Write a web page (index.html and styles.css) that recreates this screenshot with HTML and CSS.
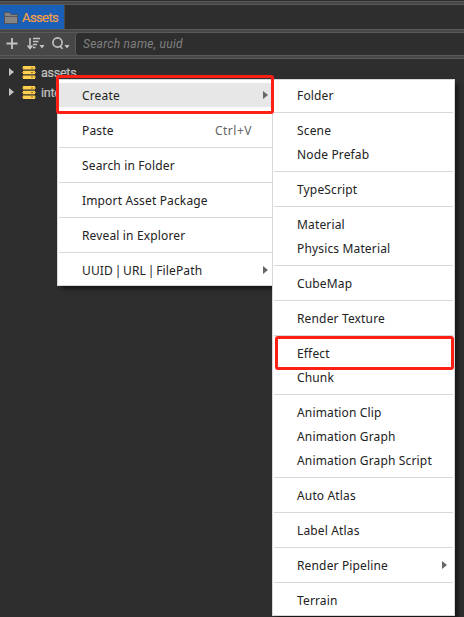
FILE: index.html
```html
<!DOCTYPE html>
<html lang="en">
<head>
<meta charset="utf-8">
<title>Assets</title>
<link rel="stylesheet" href="styles.css">
</head>
<body>
<div class="panel">
  <div class="divider"></div>
  <header class="tabs">
    <div class="tab">
      <svg class="folder" width="14" height="13" viewBox="0 0 14 13"><path d="M.5 1.500h5l1.500 2h6.500v9H.5z" fill="#858585" stroke="#4d5460"/><path d="M1 5.500h12" stroke="#5c5c5c"/></svg>
      <span>Assets</span>
    </div>
  </header>
  <div class="divider"></div>
  <div class="toolbar">
    <svg width="75" height="22" viewBox="0 0 75 22" fill="none" stroke="#c4c4c4">
      <path d="M12 5v11M6.500 10.500h11" stroke-width="1.800"/>
      <path d="M30 5v10M27.500 12.500l2.500 3 2.500-3M33 5.500h7M33 8.500h5.500M33 11.500h4M33 14.500h2.500" stroke-width="1.600"/>
      <path d="M39.500 12h5l-2.500 3.500z" fill="#c4c4c4" stroke="none"/>
      <circle cx="57.500" cy="9.500" r="4.600" stroke-width="1.600"/><path d="M60 13l2.500 2.800" stroke-width="1.700"/>
      <path d="M64.500 12h5l-2.500 3.500z" fill="#c4c4c4" stroke="none"/>
    </svg>
    <div class="search">Search name, uuid</div>
  </div>
  <div class="divider"></div>
  <div class="tree">
    <div class="node"><i class="arrow"></i><svg class="db" width="14" height="13" viewBox="0 0 14 13"><path d="M1 0h12v3.500H1zM1 4.700h12v3.500H1zM1 9.400h12v3.500H1z" fill="#ffd04f"/><path d="M0 2h2M12 2h2M0 6.500h2M12 6.500h2M0 11h2M12 11h2" stroke="#d9a936"/><path d="M9 2h2M9 6.500h2M9 11h2" stroke="#8c6d27"/></svg><span>assets</span></div>
    <div class="node"><i class="arrow"></i><svg class="db" width="14" height="13" viewBox="0 0 14 13"><path d="M1 0h12v3.500H1zM1 4.700h12v3.500H1zM1 9.400h12v3.500H1z" fill="#ffd04f"/><path d="M0 2h2M12 2h2M0 6.500h2M12 6.500h2M0 11h2M12 11h2" stroke="#d9a936"/><path d="M9 2h2M9 6.500h2M9 11h2" stroke="#8c6d27"/></svg><span>internal</span></div>
  </div>
</div>
<div class="menu context">
  <div class="item active">Create<i class="more"></i></div><hr>
  <div class="item">Paste<kbd>Ctrl+V</kbd></div><hr>
  <div class="item">Search in Folder</div><hr>
  <div class="item">Import Asset Package</div><hr>
  <div class="item">Reveal in Explorer</div><hr>
  <div class="item paths">UUID | URL | FilePath<i class="more"></i></div>
</div>
<div class="menu submenu">
  <div class="item">Folder</div><hr>
  <div class="item">Scene</div>
  <div class="item">Node Prefab</div><hr>
  <div class="item">TypeScript</div><hr>
  <div class="item">Material</div>
  <div class="item">Physics Material</div><hr>
  <div class="item">CubeMap</div><hr>
  <div class="item">Render Texture</div><hr>
  <div class="item">Effect</div>
  <div class="item">Chunk</div><hr>
  <div class="item">Animation Clip</div>
  <div class="item">Animation Graph</div>
  <div class="item">Animation Graph Script</div><hr>
  <div class="item">Auto Atlas</div><hr>
  <div class="item">Label Atlas</div><hr>
  <div class="item">Render Pipeline<i class="more"></i></div><hr>
  <div class="item">Terrain</div>
</div>
<div class="mark mark-create"></div>
<div class="mark mark-effect"></div>
</body>
</html>
```
FILE: styles.css
```css
* { box-sizing: border-box; }
body {
  margin: 0;
  height: 617px;
  overflow: hidden;
  background: #2e2e2e;
  font-family: Roboto, sans-serif;
}
.panel { padding-top: 1px; }
.divider {
  height: 4px;
  border: 1px solid #595959;
  border-width: 1px 0;
  background: #474747;
}
.tabs { height: 24px; }
.tab {
  display: flex;
  align-items: center;
  gap: 4px;
  width: 65px;
  height: 24px;
  padding-left: 4px;
  border-right: 1px solid #4a4a4a;
  background: #1a5fb8;
  color: #f5a044;
  font-size: 13px;
  letter-spacing: -0.6px;
  -webkit-text-stroke: .2px;
}
.folder { flex: none; }
.toolbar {
  display: flex;
  height: 22px;
  background: #474747;
}
.search {
  flex: 1;
  padding-left: 7px;
  border-left: 1px solid #595959;
  border-radius: 4px 0 0 4px;
  background: #2e2e2e;
  color: #808080;
  font-size: 12px;
  font-style: italic;
  letter-spacing: .27px;
  line-height: 22px;
}
.tree { padding-top: 3px; }
.node {
  display: flex;
  align-items: center;
  height: 20px;
  padding-left: 9px;
  color: #c4c4c4;
  font-size: 12.5px;
  letter-spacing: -0.25px;
  -webkit-text-stroke: .2px;
}
.arrow {
  border-left: 5px solid #c4c4c4;
  border-top: 4px solid transparent;
  border-bottom: 4px solid transparent;
}
.db { margin: 0 5px 0 8px; }
.menu {
  position: absolute;
  top: 79px;
  padding: 3px 1px;
  border: 1px solid #d7d8da;
  background: #fff;
  box-shadow: 4px 4px 4px -1px rgba(0, 0, 0, .55);
  color: #222;
  font-family: "Noto Sans", sans-serif;
  font-size: 12px;
  letter-spacing: .15px;
}
.context { left: 57px; width: 216px; padding-right: 0; }
.submenu { left: 272px; width: 183px; }
.item {
  display: flex;
  align-items: center;
  justify-content: space-between;
  height: 24px;
  padding: 0 4px 0 23px;
  white-space: nowrap;
}
.active { background: #e7e7e7; }
.paths { word-spacing: -1.6px; }
.submenu .item { padding-right: 6px; }
.menu hr {
  height: 1px;
  margin: 5px 0;
  border: 0;
  background: #d7d8da;
}
.item kbd {
  margin-right: 16px;
  color: #666;
  font: inherit;
  letter-spacing: .5px;
}
.more {
  border-left: 5px solid #666;
  border-top: 4px solid transparent;
  border-bottom: 4px solid transparent;
}
.mark {
  position: absolute;
  border: 3px solid #ff2015;
  border-radius: 3px;
}
.mark-create { left: 56px; top: 75px; width: 218px; height: 39px; }
.mark-effect { left: 275px; top: 336px; width: 179px; height: 34px; }
```
